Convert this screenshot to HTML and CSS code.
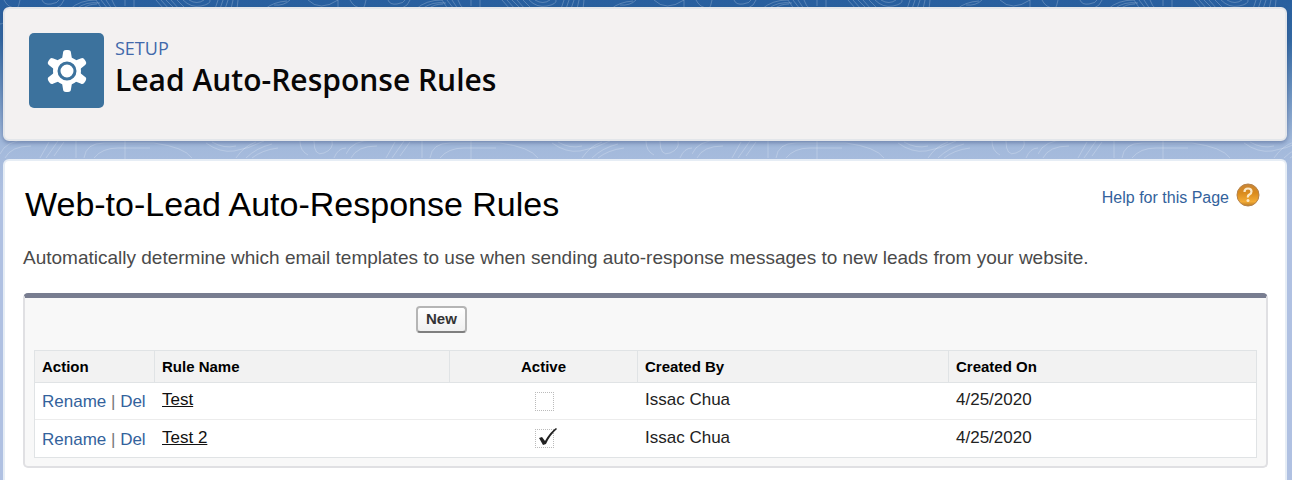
FILE: index.html
```html
<!DOCTYPE html>
<html lang="en">
<head>
    <meta charset="UTF-8">
    <meta name="viewport" content="width=device-width, initial-scale=1.0">
    <title>Lead Auto-Response Rules</title>
    <link rel="stylesheet" href="styles.css">
</head>
<body>

    <svg class="backdrop" aria-hidden="true">
        <defs>
            <pattern id="contours" width="346" height="180" patternUnits="userSpaceOnUse">
                <g fill="none" stroke="#fff" stroke-opacity="0.22">
                    <path d="M4 0q4 8 12 8M20 0q0 6-6 12M42 0q2 5 9 4t8-4M56 8q6-2 8-8M70 9q10-9 26-9M76 9q10-8 24-6M82 9q6-5 15-5"/>
                    <path d="M96 0l6 9M101 0l7 9M106 0l6 9M112 0q2 6 6 9M125 0v6M134 0v7"/>
                    <path d="M156 0l8 9M161 0l8 9M166 0l9 9M171 0l8 9M177 0l8 8M183 0q8 8 18 6t9-6M189 0q8 5 15 0M218 0l-3 9M223 0l-3 9M228 0l-3 9M233 0l-2 9M238 0l-1 9"/>
                    <path d="M265 9q8-7 22-8M274 5q10 1 16-5M308 0q12 12 30 0M338 0v8"/>
                    <path d="M0 154q6-14 28-14M5 158q6-12 26-12M40 158l9-16M46 158l12-17M54 156l10-14M76 140v18M84 158q2-15 20-15h50q30 4 38 15M94 158q8-10 24-10h32M125 140v20"/>
                    <path d="M206 143q14 10 28 8t30-10M212 142q12 7 24 4M236 158q8-12 20-16M246 158q10-10 26-14M252 158q10-8 26-10M300 141q0 10 8 14M314 141q0 16 10 12t8-12M334 158q4-10 12-10"/>
                    <path d="M0 24q5 0 5-6M341 20q0 12 5 16M340 60q4 2 6 8M340 90q4 6 6 4"/>
                </g>
            </pattern>
        </defs>
        <rect width="100%" height="160" fill="url(#contours)"/>
    </svg>

    <div class="page">
        <header class="setup-header">
            <div class="setup-icon">
                <svg width="42" height="42" viewBox="0 0 42 42" aria-hidden="true">
                    <defs>
                        <path id="tooth" d="M16 9l1-6q0-3 3-3h2q3 0 3 3l1 6z"/>
                    </defs>
                    <g fill="#fff">
                        <circle cx="21" cy="21" r="14"/>
                        <use href="#tooth"/>
                        <use href="#tooth" transform="rotate(60 21 21)"/>
                        <use href="#tooth" transform="rotate(120 21 21)"/>
                        <use href="#tooth" transform="rotate(180 21 21)"/>
                        <use href="#tooth" transform="rotate(240 21 21)"/>
                        <use href="#tooth" transform="rotate(300 21 21)"/>
                    </g>
                    <circle cx="21" cy="21" r="8" fill="#fff" stroke="#3c729d" stroke-width="3"/>
                </svg>
            </div>
            <div>
                <p class="setup-label">SETUP</p>
                <h1 class="setup-title">Lead Auto-Response Rules</h1>
            </div>
        </header>

        <main class="content">
            <div class="content-top">
                <h2 class="content-title">Web-to-Lead Auto-Response Rules</h2>
                <a class="help-link" href="#">
                    <span class="help-text">Help for this Page</span>
                    <svg width="24" height="24" viewBox="0 0 24 24" aria-hidden="true">
                        <defs>
                            <linearGradient id="orange" x1="0" y1="0" x2="0" y2="1">
                                <stop offset="0" stop-color="#c98536"/>
                                <stop offset="0.4" stop-color="#d98a1c"/>
                                <stop offset="0.8" stop-color="#f3ab35"/>
                                <stop offset="1" stop-color="#b97a25"/>
                            </linearGradient>
                        </defs>
                        <circle cx="12" cy="12" r="11" fill="url(#orange)" stroke="#b5824a"/>
                        <path d="M8.500 9q0-3.500 3.500-3.500t3.500 3q0 2-2 3t-1.500 3" fill="none" stroke="#fbe9c8" stroke-width="2.200"/>
                        <circle cx="12" cy="17.500" r="1.500" fill="#fbe9c8"/>
                    </svg>
                </a>
            </div>
            <p class="description">Automatically determine which email templates to use when sending auto-response messages to new leads from your website.</p>

            <section class="list-block">
                <div class="list-buttons">
                    <button class="btn" type="button">New</button>
                </div>
                <table class="rules">
                    <colgroup>
                        <col class="col-action">
                        <col class="col-name">
                        <col class="col-active">
                        <col class="col-by">
                        <col class="col-on">
                    </colgroup>
                    <thead>
                        <tr>
                            <th>Action</th>
                            <th>Rule Name</th>
                            <th class="center">Active</th>
                            <th>Created By</th>
                            <th>Created On</th>
                        </tr>
                    </thead>
                    <tbody>
                        <tr>
                            <td class="actions"><a href="#">Rename</a> | <a href="#">Del</a></td>
                            <td><a class="rule-link" href="#">Test</a></td>
                            <td class="center">
                                <span class="check-wrap">
                                    <input class="check" type="checkbox" aria-label="Test active">
                                </span>
                            </td>
                            <td>Issac Chua</td>
                            <td>4/25/2020</td>
                        </tr>
                        <tr>
                            <td class="actions"><a href="#">Rename</a> | <a href="#">Del</a></td>
                            <td><a class="rule-link" href="#">Test 2</a></td>
                            <td class="center">
                                <span class="check-wrap">
                                    <input class="check" type="checkbox" aria-label="Test 2 active" checked>
                                    <svg class="check-mark" width="20" height="20" viewBox="0 0 20 20" aria-hidden="true">
                                        <path d="M1 11l3-1 3 4q5-9 11-13l1 1q-7 6-11 15l-3 1z" fill="#222"/>
                                    </svg>
                                </span>
                            </td>
                            <td>Issac Chua</td>
                            <td>4/25/2020</td>
                        </tr>
                    </tbody>
                </table>
            </section>
        </main>
    </div>

</body>
</html>
```

FILE: styles.css
```css
* {
    box-sizing: border-box;
}

body {
    margin: 0;
    font-family: "Liberation Sans", Arial, sans-serif;
    color: #222;
    background: #b0c1e2 linear-gradient(#285f9f 0, #3369a3 40px, #a1b8da 140px, #b0c1e2 200px) no-repeat;
}

h1, h2, p {
    margin: 0;
}

a {
    color: #33629c;
    text-decoration: none;
}

.backdrop {
    position: absolute;
    top: 0;
    left: 0;
    width: 100%;
    height: 100%;
}

.page {
    position: relative;
    display: flex;
    flex-direction: column;
    gap: 18px;
    min-height: 100vh;
    padding: 7px 5px 0 3px;
}

.setup-header {
    display: flex;
    gap: 11px;
    padding: 24px 24px 31px;
    background: #f3f1f1;
    border: 2px solid #e3e6ea;
    border-radius: 6px;
    box-shadow: 0 2px 4px rgba(40, 60, 110, 0.4);
}

.setup-icon {
    display: flex;
    align-items: center;
    justify-content: center;
    width: 75px;
    height: 75px;
    background: #3c729d;
    border-radius: 5px;
}

.setup-label {
    padding-top: 3px;
    font: 18px/24px "Open Sans", sans-serif;
    color: #4169ab;
}

.setup-title {
    font: 600 30px/40px "Open Sans", sans-serif;
    color: #080707;
}

.content {
    flex: 1;
    padding: 22px 17px 11px 18px;
    background: #fff;
    border: 2px solid #e6edf5;
    border-bottom: 0;
    border-radius: 6px 6px 0 0;
}

.content-top {
    display: flex;
    justify-content: space-between;
    align-items: flex-start;
    padding-right: 8px;
}

.content-title {
    padding-left: 2px;
    font-size: 34px;
    line-height: 42px;
    font-weight: normal;
    color: #000;
}

.help-link {
    display: flex;
    align-items: center;
    gap: 7px;
    font-size: 16px;
}

.help-text {
    padding-top: 6px;
}

.description {
    padding-top: 21px;
    font-size: 19px;
    line-height: 24px;
    color: #4a4a4a;
}

.list-block {
    margin-top: 23px;
    padding: 8px 9px;
    background: #f8f8f8;
    border: 2px solid #e0e0e3;
    border-top: 5px solid #787d90;
    border-radius: 5px;
}

.list-buttons {
    padding-left: 382px;
    padding-bottom: 17px;
}

.btn {
    display: block;
    height: 27px;
    padding: 0 8px 2px;
    font: bold 15px "Liberation Sans", Arial, sans-serif;
    color: #333;
    background: linear-gradient(#fff, #f0f0f0);
    border: 2px solid #b5b5b5;
    border-bottom-color: #7f7f7f;
    border-radius: 4px;
}

.rules {
    width: 100%;
    table-layout: fixed;
    border-collapse: separate;
    border-spacing: 0;
    background: #fff;
    border: 1px solid #e0e3e5;
    font-size: 17px;
    line-height: 20px;
}

.col-action {
    width: 120px;
}

.col-name {
    width: 295px;
}

.col-active {
    width: 188px;
}

.col-by {
    width: 311px;
}

.rules th,
.rules td {
    padding: 0 7px;
    text-align: left;
    white-space: nowrap;
}

.rules th {
    height: 32px;
    font-size: 15px;
    color: #000;
    background: #f2f2f2;
    border-bottom: 1px solid #e0e3e5;
    border-right: 1px solid #e0e3e5;
}

.rules th:last-child {
    border-right: 0;
}

.rules td {
    height: 37px;
    padding-bottom: 2px;
    border-bottom: 1px solid #ececec;
}

.rules tbody tr:last-child td {
    border-bottom: 0;
}

.rules .center {
    text-align: center;
}

.rules .actions {
    padding-top: 2px;
    padding-bottom: 0;
    color: #777;
}

.rule-link {
    color: #111;
    text-decoration: underline;
}

.check-wrap {
    display: block;
    position: relative;
    width: 19px;
    margin: 2px auto 0;
}

.check {
    appearance: none;
    display: block;
    width: 19px;
    height: 19px;
    margin: 0;
    background: #fff;
    border: 1px dotted #bbb;
}

.check-mark {
    position: absolute;
    top: -2px;
    left: 3px;
}
```
